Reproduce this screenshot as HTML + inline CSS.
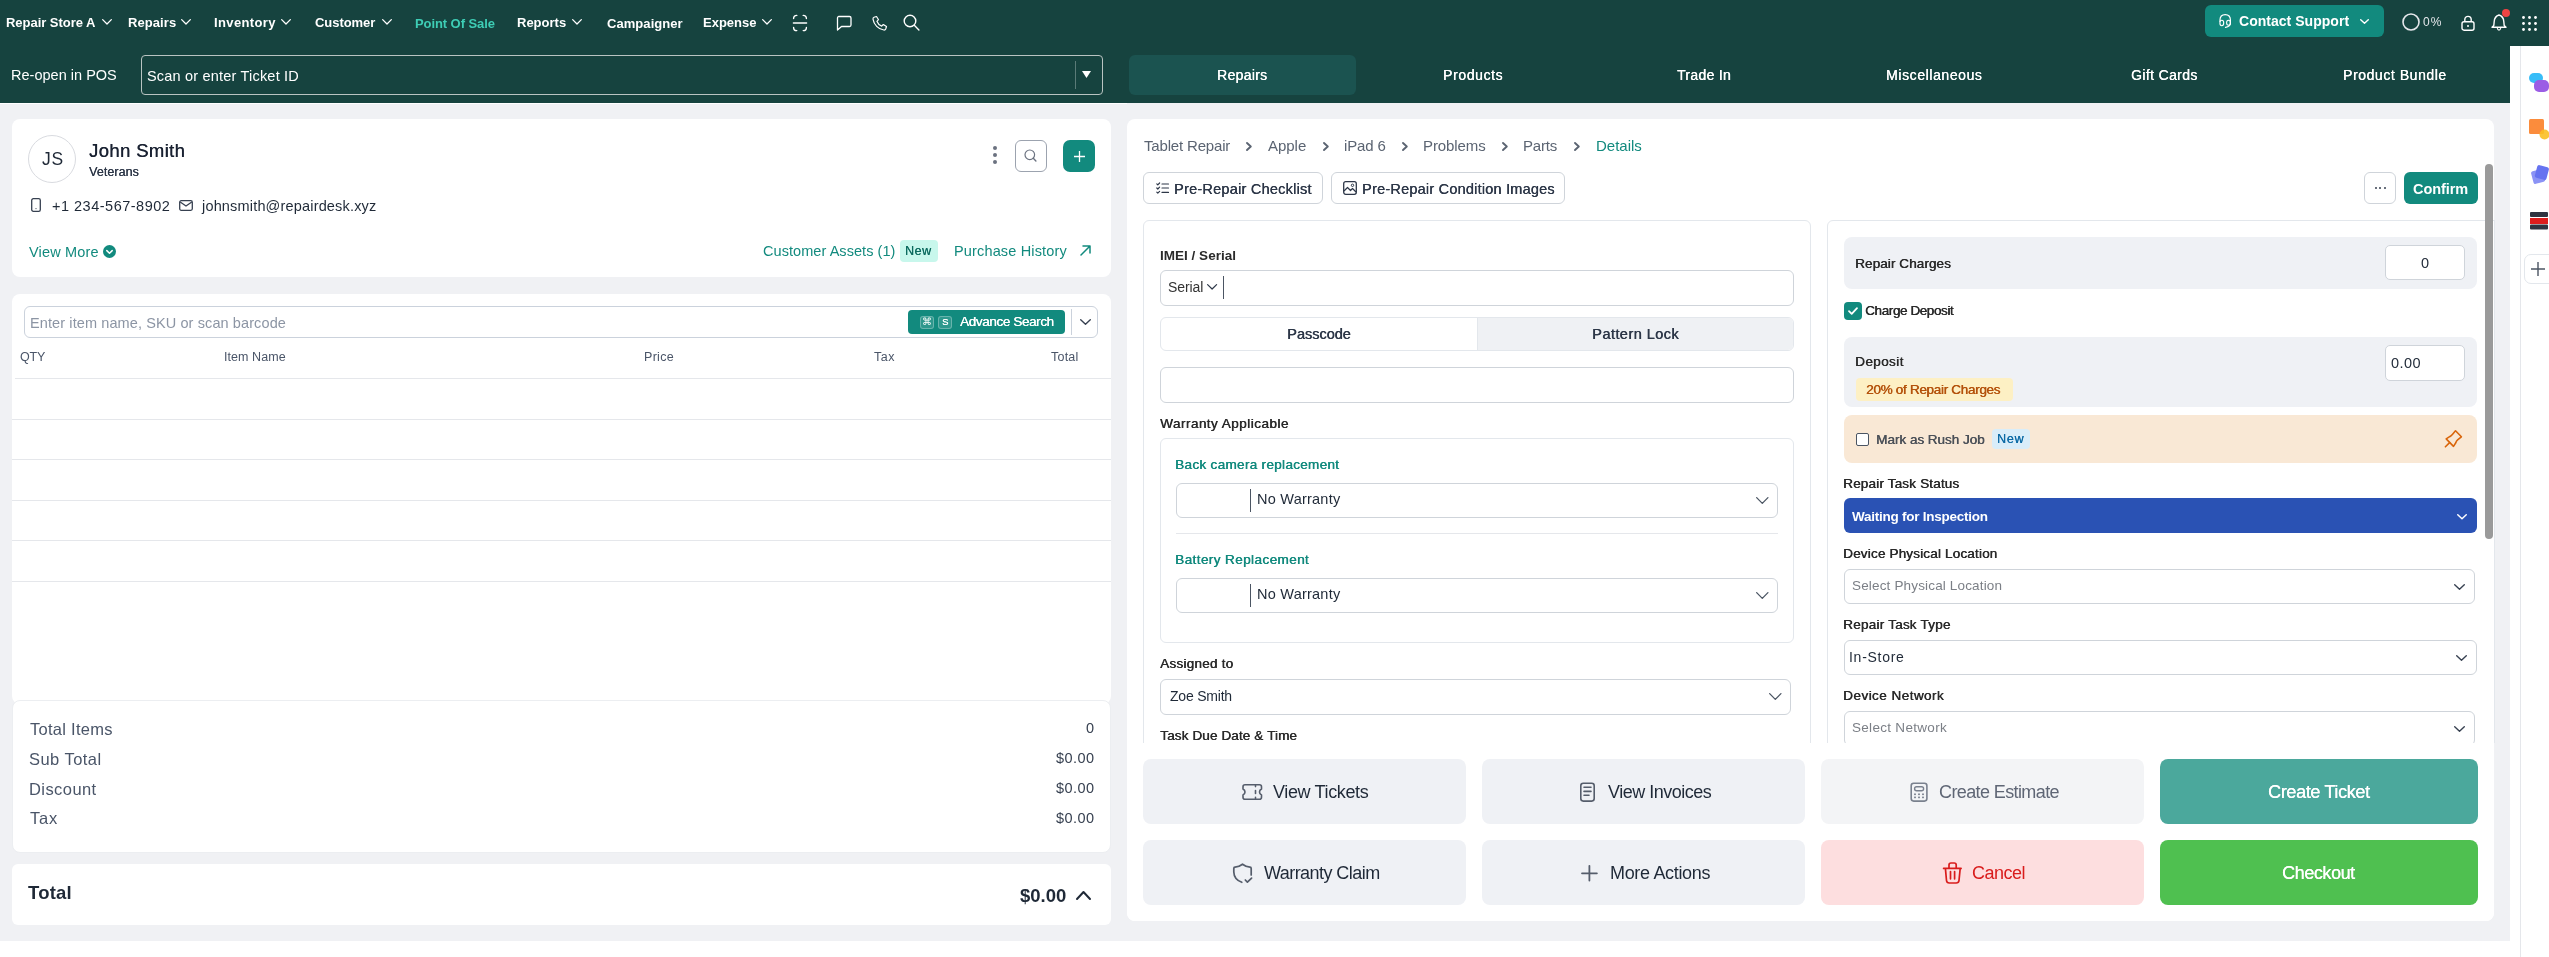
<!DOCTYPE html>
<html><head><meta charset="utf-8"><style>
html,body{margin:0;padding:0;}
body{width:2549px;height:957px;overflow:hidden;position:relative;background:#fff;font-family:"Liberation Sans", sans-serif;}
.t{position:absolute;white-space:nowrap;line-height:1;will-change:transform;}
svg{overflow:visible}
</style></head><body>
<div style="position:absolute;left:0px;top:0px;width:2549px;height:957px;background:#ffffff;border-radius:0px;"></div>
<div style="position:absolute;left:0px;top:103px;width:2510px;height:838px;background:#f0f1f4;border-radius:0px;"></div>
<div style="position:absolute;left:0px;top:0px;width:2549px;height:46px;background:#16433f;border-radius:0px;"></div>
<div style="position:absolute;left:0px;top:46px;width:2510px;height:57px;background:#16433f;border-radius:0px;"></div>
<div style="position:absolute;left:2510px;top:46px;width:39px;height:911px;background:#ffffff;border-radius:0px;"></div>
<div style="position:absolute;left:2520px;top:46px;width:1px;height:911px;background:#e5e7eb;border-radius:0px;"></div>
<svg style="position:absolute;left:102.0px;top:19px;" width="10" height="5.7" viewBox="0 0 10 5.7" fill="none"><polyline points="0.65,0.65 5.0,5.05 9.35,0.65" stroke="#ffffff" stroke-width="1.3" stroke-linecap="round" stroke-linejoin="round"/></svg>
<svg style="position:absolute;left:181.0px;top:19px;" width="10" height="5.7" viewBox="0 0 10 5.7" fill="none"><polyline points="0.65,0.65 5.0,5.05 9.35,0.65" stroke="#ffffff" stroke-width="1.3" stroke-linecap="round" stroke-linejoin="round"/></svg>
<svg style="position:absolute;left:281px;top:19px;" width="10" height="5.7" viewBox="0 0 10 5.7" fill="none"><polyline points="0.65,0.65 5.0,5.05 9.35,0.65" stroke="#ffffff" stroke-width="1.3" stroke-linecap="round" stroke-linejoin="round"/></svg>
<svg style="position:absolute;left:381.6px;top:19px;" width="10" height="5.7" viewBox="0 0 10 5.7" fill="none"><polyline points="0.65,0.65 5.0,5.05 9.35,0.65" stroke="#ffffff" stroke-width="1.3" stroke-linecap="round" stroke-linejoin="round"/></svg>
<svg style="position:absolute;left:572px;top:19px;" width="10" height="5.7" viewBox="0 0 10 5.7" fill="none"><polyline points="0.65,0.65 5.0,5.05 9.35,0.65" stroke="#ffffff" stroke-width="1.3" stroke-linecap="round" stroke-linejoin="round"/></svg>
<svg style="position:absolute;left:762px;top:19px;" width="10" height="5.7" viewBox="0 0 10 5.7" fill="none"><polyline points="0.65,0.65 5.0,5.05 9.35,0.65" stroke="#ffffff" stroke-width="1.3" stroke-linecap="round" stroke-linejoin="round"/></svg>
<svg style="position:absolute;left:790px;top:12px;" width="20" height="22" viewBox="790 12 20 22" fill="none"><path d="M793.6 18.6A3.2 3.2 0 0 1 796.8 15.4M803.2 15.4A3.2 3.2 0 0 1 806.4 18.6M806.4 27.4A3.2 3.2 0 0 1 803.2 30.6M796.8 30.6A3.2 3.2 0 0 1 793.6 27.4M793.4 23H806.6" stroke="#fff" stroke-width="1.4" stroke-linecap="round"/></svg>
<svg style="position:absolute;left:836px;top:15px;" width="16" height="16" viewBox="0 0 16 16" fill="none"><path d="M2.5 1.5h11a1.5 1.5 0 0 1 1.5 1.5v7a1.5 1.5 0 0 1-1.5 1.5H5.5L1.5 15V3a1.5 1.5 0 0 1 1-1.5z" stroke="#fff" stroke-width="1.3" stroke-linejoin="round"/></svg>
<svg style="position:absolute;left:872px;top:15px;" width="16" height="16" viewBox="0 0 16 16" fill="none"><path d="M4.5 1.5l2 3.2-1.6 1.6a8 8 0 0 0 4.8 4.8l1.6-1.6 3.2 2-.8 2.5c-.3.8-1.1 1.1-1.9 1C6.4 14.2 1.8 9.6 1 4.2c-.1-.8.3-1.6 1-1.9z" stroke="#fff" stroke-width="1.2" stroke-linejoin="round"/></svg>
<svg style="position:absolute;left:903px;top:13.8px;" width="17" height="17" viewBox="0 0 17 17" fill="none"><circle cx="7" cy="7" r="5.8" stroke="#fff" stroke-width="1.4"/><path d="M11.3 11.3l4.6 4.6" stroke="#fff" stroke-width="1.4" stroke-linecap="round"/></svg>
<div style="position:absolute;left:2205px;top:5px;width:179px;height:32px;background:#128a7e;border-radius:6px;"></div>
<svg style="position:absolute;left:2217px;top:12px;" width="16" height="18" viewBox="2217 12 16 18" fill="none"><path d="M2220 21.5V20Q2220 14.6 2225.2 14.6Q2230.4 14.6 2230.4 20V23.5Q2230.4 26.5 2225.5 27.3" stroke="#fff" stroke-width="1.2" stroke-linecap="round"/><ellipse cx="2221.8" cy="23" rx="1.9" ry="2.7" stroke="#fff" stroke-width="1.1"/><ellipse cx="2228.5" cy="22.8" rx="1.9" ry="2.5" stroke="#fff" stroke-width="1.1"/></svg>
<svg style="position:absolute;left:2360px;top:18.5px;" width="9" height="5" viewBox="0 0 9 5" fill="none"><polyline points="0.7,0.7 4.5,4.3 8.3,0.7" stroke="#ffffff" stroke-width="1.4" stroke-linecap="round" stroke-linejoin="round"/></svg>
<svg style="position:absolute;left:2402px;top:13px;" width="18" height="18" viewBox="0 0 18 18" fill="none"><circle cx="9" cy="9" r="8" stroke="#e5e7eb" stroke-width="1.6"/></svg>
<svg style="position:absolute;left:2461px;top:15px;" width="14" height="16" viewBox="0 0 14 16" fill="none"><rect x="1" y="6.8" width="12" height="8.4" rx="2" stroke="#fff" stroke-width="1.4"/><path d="M3.8 6.8V4.6a3.2 3.2 0 0 1 6.4 0v2.2" stroke="#fff" stroke-width="1.4"/><circle cx="7" cy="11" r="1" fill="#fff"/></svg>
<svg style="position:absolute;left:2489px;top:12px;" width="20" height="22" viewBox="2489 12 20 22" fill="none"><path d="M2499 15Q2503.5 16.5 2503.8 21.5L2504.2 25.5L2506 27.3H2492L2493.8 25.5L2494.2 21.5Q2494.5 16.5 2499 15Z" stroke="#fff" stroke-width="1.4" stroke-linejoin="round"/><path d="M2497.3 28.2Q2497.8 30.2 2499 30.2Q2500.2 30.2 2500.7 28.2" stroke="#fff" stroke-width="1.3"/></svg>
<div style="position:absolute;left:2502px;top:9px;width:8px;height:8px;background:#ef4444;border-radius:4px;"></div>
<svg style="position:absolute;left:2522px;top:15.5px;" width="15" height="15" viewBox="0 0 15 15" fill="none"><circle cx="1.5" cy="1.5" r="1.4" fill="#fff"/><circle cx="1.5" cy="7.5" r="1.4" fill="#fff"/><circle cx="1.5" cy="13.5" r="1.4" fill="#fff"/><circle cx="7.5" cy="1.5" r="1.4" fill="#fff"/><circle cx="7.5" cy="7.5" r="1.4" fill="#fff"/><circle cx="7.5" cy="13.5" r="1.4" fill="#fff"/><circle cx="13.5" cy="1.5" r="1.4" fill="#fff"/><circle cx="13.5" cy="7.5" r="1.4" fill="#fff"/><circle cx="13.5" cy="13.5" r="1.4" fill="#fff"/></svg>
<div style="position:absolute;left:141px;top:55px;width:962px;height:40px;background:transparent;border:1px solid #b9c4c2;box-sizing:border-box;border-radius:4px;"></div>
<div style="position:absolute;left:1075px;top:61px;width:1px;height:28px;background:#5b7b78;border-radius:0px;"></div>
<svg style="position:absolute;left:1082px;top:71px;" width="9" height="7" viewBox="0 0 9 7" fill="none"><path d="M0 0h9L4.5 7z" fill="#fff"/></svg>
<div style="position:absolute;left:1129px;top:55px;width:227px;height:40px;background:#1b5350;border-radius:6px;"></div>
<div style="position:absolute;left:0px;top:103px;width:1127px;height:1px;background:#ffffff;border-radius:0px;"></div>
<div style="position:absolute;left:12px;top:119px;width:1099px;height:158px;background:#ffffff;border-radius:8px;"></div>
<div style="position:absolute;left:28px;top:135px;width:48px;height:48px;background:#ffffff;border:1px solid #d9dbe0;box-sizing:border-box;border-radius:24px;"></div>
<svg style="position:absolute;left:31px;top:197.5px;" width="10" height="14" viewBox="0 0 10 14" fill="none"><rect x="0.7" y="0.7" width="8.6" height="12.6" rx="1.6" stroke="#374151" stroke-width="1.3"/><circle cx="5" cy="10.6" r="0.6" fill="#374151"/></svg>
<svg style="position:absolute;left:179px;top:199.5px;" width="14" height="11" viewBox="0 0 14 11" fill="none"><rect x="0.7" y="0.7" width="12.6" height="9.6" rx="1.5" stroke="#374151" stroke-width="1.3"/><path d="M1.2 2l5.8 4 5.8-4" stroke="#374151" stroke-width="1.3" stroke-linejoin="round"/></svg>
<div style="position:absolute;left:993px;top:146.4px;width:4px;height:4px;background:#6b7280;border-radius:2px;"></div>
<div style="position:absolute;left:993px;top:153.4px;width:4px;height:4px;background:#6b7280;border-radius:2px;"></div>
<div style="position:absolute;left:993px;top:160.4px;width:4px;height:4px;background:#6b7280;border-radius:2px;"></div>
<div style="position:absolute;left:1015px;top:140px;width:32px;height:32px;background:#ffffff;border:1px solid #9ca3af;box-sizing:border-box;border-radius:6px;"></div>
<svg style="position:absolute;left:1024px;top:149px;" width="13" height="13" viewBox="0 0 13 13" fill="none"><circle cx="5.8" cy="5.8" r="4.8" stroke="#6b7280" stroke-width="1.2"/><path d="M9.3 9.3l2.6 2.6" stroke="#6b7280" stroke-width="1.4" stroke-linecap="round"/></svg>
<div style="position:absolute;left:1063px;top:140px;width:32px;height:32px;background:#128a7e;border-radius:7px;"></div>
<svg style="position:absolute;left:1073.5px;top:150.5px;" width="11" height="11" viewBox="0 0 11 11" fill="none"><path d="M5.5 0v11M0 5.5h11" stroke="#fff" stroke-width="1.3"/></svg>
<svg style="position:absolute;left:103px;top:245px;" width="13" height="13" viewBox="0 0 13 13" fill="none"><circle cx="6.5" cy="6.5" r="6.5" fill="#128a7e"/><path d="M3.8 5.6l2.7 2.6 2.7-2.6" stroke="#fff" stroke-width="1.5" stroke-linecap="round" stroke-linejoin="round"/></svg>
<div style="position:absolute;left:900px;top:240px;width:38px;height:22px;background:#c8f7ec;border-radius:4px;"></div>
<svg style="position:absolute;left:1080px;top:245px;" width="11" height="11" viewBox="0 0 11 11" fill="none"><path d="M1 10L10 1M3 1h7v7" stroke="#128a7e" stroke-width="1.5" stroke-linecap="round" stroke-linejoin="round"/></svg>
<div style="position:absolute;left:12px;top:294px;width:1099px;height:410px;background:#ffffff;border-radius:8px;"></div>
<div style="position:absolute;left:24px;top:306px;width:1074px;height:32px;background:#ffffff;border:1px solid #cbd2dc;box-sizing:border-box;border-radius:6px;"></div>
<div style="position:absolute;left:908px;top:310px;width:157px;height:24px;background:#128a7e;border-radius:4px;"></div>
<div style="position:absolute;left:920px;top:315.5px;width:14px;height:13px;background:rgba(255,255,255,0.12);border:1px solid rgba(255,255,255,0.28);box-sizing:border-box;border-radius:3px;"></div>
<div style="position:absolute;left:938px;top:315.5px;width:14px;height:13px;background:rgba(255,255,255,0.12);border:1px solid rgba(255,255,255,0.28);box-sizing:border-box;border-radius:3px;"></div>
<div style="position:absolute;left:1071px;top:309px;width:1px;height:26px;background:#cbd2dc;border-radius:0px;"></div>
<svg style="position:absolute;left:1080px;top:319px;" width="11" height="6" viewBox="0 0 11 6" fill="none"><polyline points="0.7,0.7 5.5,5.3 10.3,0.7" stroke="#374151" stroke-width="1.4" stroke-linecap="round" stroke-linejoin="round"/></svg>
<div style="position:absolute;left:15px;top:378px;width:1096px;height:1px;background:#e5e7eb;border-radius:0px;"></div>
<div style="position:absolute;left:12px;top:419px;width:1099px;height:1px;background:#e5e7eb;border-radius:0px;"></div>
<div style="position:absolute;left:12px;top:459px;width:1099px;height:1px;background:#e5e7eb;border-radius:0px;"></div>
<div style="position:absolute;left:12px;top:500px;width:1099px;height:1px;background:#e5e7eb;border-radius:0px;"></div>
<div style="position:absolute;left:12px;top:540px;width:1099px;height:1px;background:#e5e7eb;border-radius:0px;"></div>
<div style="position:absolute;left:12px;top:581px;width:1099px;height:1px;background:#e5e7eb;border-radius:0px;"></div>
<div style="position:absolute;left:12px;top:700px;width:1099px;height:153px;background:#ffffff;border:1px solid #eceef1;box-sizing:border-box;border-radius:8px;"></div>
<div style="position:absolute;left:12px;top:864px;width:1099px;height:61px;background:#ffffff;border-radius:6px;"></div>
<svg style="position:absolute;left:1076px;top:891px;" width="15" height="9" viewBox="0 0 15 9" fill="none"><polyline points="1.0,8.0 7.5,1.0 14.0,8.0" stroke="#1f2937" stroke-width="2" stroke-linecap="round" stroke-linejoin="round"/></svg>
<div style="position:absolute;left:1127px;top:119px;width:1367px;height:802px;background:#ffffff;border-radius:8px;"></div>
<svg style="position:absolute;left:1246px;top:141.5px;" width="6" height="9" viewBox="0 0 6 9" fill="none"><polyline points="1,1 4.8,4.5 1,8" stroke="#5b6472" stroke-width="1.9" stroke-linecap="round" stroke-linejoin="round"/></svg>
<svg style="position:absolute;left:1322.7px;top:141.5px;" width="6" height="9" viewBox="0 0 6 9" fill="none"><polyline points="1,1 4.8,4.5 1,8" stroke="#5b6472" stroke-width="1.9" stroke-linecap="round" stroke-linejoin="round"/></svg>
<svg style="position:absolute;left:1401.5px;top:141.5px;" width="6" height="9" viewBox="0 0 6 9" fill="none"><polyline points="1,1 4.8,4.5 1,8" stroke="#5b6472" stroke-width="1.9" stroke-linecap="round" stroke-linejoin="round"/></svg>
<svg style="position:absolute;left:1502px;top:141.5px;" width="6" height="9" viewBox="0 0 6 9" fill="none"><polyline points="1,1 4.8,4.5 1,8" stroke="#5b6472" stroke-width="1.9" stroke-linecap="round" stroke-linejoin="round"/></svg>
<svg style="position:absolute;left:1573.7px;top:141.5px;" width="6" height="9" viewBox="0 0 6 9" fill="none"><polyline points="1,1 4.8,4.5 1,8" stroke="#5b6472" stroke-width="1.9" stroke-linecap="round" stroke-linejoin="round"/></svg>
<div style="position:absolute;left:1143px;top:172px;width:180px;height:32px;background:#ffffff;border:1px solid #cfd4da;box-sizing:border-box;border-radius:6px;"></div>
<svg style="position:absolute;left:1156px;top:182px;" width="13" height="12" viewBox="0 0 13 12" fill="none"><path d="M0.8 1.8l1 1 1.8-1.8M0.8 6l1 1 1.8-1.8M0.8 10.2l1 1 1.8-1.8M6 2h6.5M6 6h6.5M6 10.4h6.5" stroke="#2d3748" stroke-width="1.2" stroke-linecap="round" stroke-linejoin="round"/></svg>
<div style="position:absolute;left:1331px;top:172px;width:234px;height:32px;background:#ffffff;border:1px solid #cfd4da;box-sizing:border-box;border-radius:6px;"></div>
<svg style="position:absolute;left:1343px;top:181px;" width="14" height="14" viewBox="0 0 14 14" fill="none"><rect x="0.7" y="0.7" width="12.6" height="12.6" rx="2" stroke="#2d3748" stroke-width="1.3"/><path d="M1 10l3.5-3.5 3 3 2-2 3.5 3.5" stroke="#2d3748" stroke-width="1.2" stroke-linejoin="round"/><circle cx="9.5" cy="4.3" r="1.2" stroke="#2d3748" stroke-width="1"/></svg>
<div style="position:absolute;left:2364px;top:172px;width:32px;height:32px;background:#ffffff;border:1px solid #cfd4da;box-sizing:border-box;border-radius:6px;"></div>
<div style="position:absolute;left:2374.5px;top:187.2px;width:2.2px;height:2.2px;background:#374151;border-radius:1.1px;"></div>
<div style="position:absolute;left:2379px;top:187.2px;width:2.2px;height:2.2px;background:#374151;border-radius:1.1px;"></div>
<div style="position:absolute;left:2383.5px;top:187.2px;width:2.2px;height:2.2px;background:#374151;border-radius:1.1px;"></div>
<div style="position:absolute;left:2404px;top:172px;width:74px;height:32px;background:#128a7e;border-radius:6px;"></div>
<div style="position:absolute;left:1143px;top:220px;width:668px;height:560px;background:#ffffff;border:1px solid #e3e7ec;box-sizing:border-box;border-radius:6px;"></div>
<div style="position:absolute;left:1160px;top:270px;width:634px;height:36px;background:#ffffff;border:1px solid #cfd4da;box-sizing:border-box;border-radius:6px;"></div>
<svg style="position:absolute;left:1206.5px;top:283.5px;" width="10.2" height="5.6" viewBox="0 0 10.2 5.6" fill="none"><polyline points="0.6,0.6 5.1,5.0 9.6,0.6" stroke="#2d3748" stroke-width="1.2" stroke-linecap="round" stroke-linejoin="round"/></svg>
<div style="position:absolute;left:1223px;top:276px;width:1px;height:23px;background:#4b5563;border-radius:0px;"></div>
<div style="position:absolute;left:1160px;top:317px;width:634px;height:34px;background:#ffffff;border:1px solid #e3e7ec;box-sizing:border-box;border-radius:6px;"></div>
<div style="position:absolute;left:1477.5px;top:318px;width:315.5px;height:32px;background:#eff1f4;border-radius:0px;border-radius:0 5px 5px 0;"></div>
<div style="position:absolute;left:1477px;top:318px;width:1px;height:32px;background:#e3e7ec;border-radius:0px;"></div>
<div style="position:absolute;left:1160px;top:367px;width:634px;height:36px;background:#ffffff;border:1px solid #cfd4da;box-sizing:border-box;border-radius:6px;"></div>
<div style="position:absolute;left:1160px;top:438px;width:634px;height:205px;background:#ffffff;border:1px solid #e3e7ec;box-sizing:border-box;border-radius:6px;"></div>
<div style="position:absolute;left:1176px;top:483px;width:602px;height:35px;background:#ffffff;border:1px solid #cfd4da;box-sizing:border-box;border-radius:6px;"></div>
<div style="position:absolute;left:1250px;top:489px;width:1px;height:23px;background:#4b5563;border-radius:0px;"></div>
<svg style="position:absolute;left:1756px;top:497px;" width="12.6" height="7" viewBox="0 0 12.6 7" fill="none"><polyline points="0.65,0.65 6.3,6.35 11.95,0.65" stroke="#4b5563" stroke-width="1.3" stroke-linecap="round" stroke-linejoin="round"/></svg>
<div style="position:absolute;left:1176px;top:578px;width:602px;height:35px;background:#ffffff;border:1px solid #cfd4da;box-sizing:border-box;border-radius:6px;"></div>
<div style="position:absolute;left:1250px;top:584px;width:1px;height:23px;background:#4b5563;border-radius:0px;"></div>
<svg style="position:absolute;left:1756px;top:592px;" width="12.6" height="7" viewBox="0 0 12.6 7" fill="none"><polyline points="0.65,0.65 6.3,6.35 11.95,0.65" stroke="#4b5563" stroke-width="1.3" stroke-linecap="round" stroke-linejoin="round"/></svg>
<div style="position:absolute;left:1176px;top:533px;width:602px;height:1px;background:#e5e7eb;border-radius:0px;"></div>
<div style="position:absolute;left:1160px;top:679px;width:631px;height:36px;background:#ffffff;border:1px solid #cfd4da;box-sizing:border-box;border-radius:6px;"></div>
<svg style="position:absolute;left:1769px;top:693px;" width="12.6" height="7" viewBox="0 0 12.6 7" fill="none"><polyline points="0.65,0.65 6.3,6.35 11.95,0.65" stroke="#4b5563" stroke-width="1.3" stroke-linecap="round" stroke-linejoin="round"/></svg>
<div style="position:absolute;left:1827px;top:220px;width:680px;height:560px;background:#ffffff;border:1px solid #e3e7ec;box-sizing:border-box;border-radius:6px;"></div>
<div style="position:absolute;left:2494px;top:119px;width:16px;height:822px;background:#f0f1f4;border-radius:0px;"></div>
<div style="position:absolute;left:1844px;top:237px;width:633px;height:52px;background:#eff1f5;border-radius:8px;"></div>
<div style="position:absolute;left:2385px;top:245px;width:80px;height:35px;background:#ffffff;border:1px solid #cfd4da;box-sizing:border-box;border-radius:5px;"></div>
<div style="position:absolute;left:1844px;top:302px;width:18px;height:18px;background:#128a7e;border-radius:4px;"></div>
<svg style="position:absolute;left:1848px;top:306px;" width="10" height="10" viewBox="0 0 10 10" fill="none"><path d="M1 5.2l2.7 2.6L9 2.2" stroke="#fff" stroke-width="1.8" stroke-linecap="round" stroke-linejoin="round"/></svg>
<div style="position:absolute;left:1844px;top:337px;width:633px;height:70px;background:#eff1f5;border-radius:8px;"></div>
<div style="position:absolute;left:1856px;top:378px;width:157px;height:23px;background:#fdf0c4;border-radius:4px;"></div>
<div style="position:absolute;left:2385px;top:345px;width:80px;height:36px;background:#ffffff;border:1px solid #cfd4da;box-sizing:border-box;border-radius:5px;"></div>
<div style="position:absolute;left:1844px;top:415px;width:633px;height:48px;background:#f9e8d5;border-radius:8px;"></div>
<div style="position:absolute;left:1856px;top:433px;width:13px;height:13px;background:#ffffff;border:1px solid #4b5563;box-sizing:border-box;border-radius:2px;"></div>
<div style="position:absolute;left:1992px;top:429px;width:38px;height:20px;background:#d9edf9;border-radius:4px;"></div>
<svg style="position:absolute;left:2441px;top:427px;" width="24" height="24" viewBox="2441 427 24 24" fill="none"><path d="M2455.5 430.8L2461.4 436.8L2457.6 439.8Q2456.3 440.9 2455.8 442.8L2453.5 446.4L2446.2 438.9L2449.6 436.7Q2451.4 435.6 2452.6 434.2Z" stroke="#d9650b" stroke-width="1.6" stroke-linejoin="round"/><path d="M2449.6 442.6L2445.4 446.8" stroke="#d9650b" stroke-width="1.6" stroke-linecap="round"/></svg>
<div style="position:absolute;left:1844px;top:498px;width:633px;height:35px;background:#2a52b4;border-radius:6px;"></div>
<svg style="position:absolute;left:2456.5px;top:513.5px;" width="10" height="5.5" viewBox="0 0 10 5.5" fill="none"><polyline points="0.75,0.75 5.0,4.75 9.25,0.75" stroke="#ffffff" stroke-width="1.5" stroke-linecap="round" stroke-linejoin="round"/></svg>
<div style="position:absolute;left:1844px;top:568.5px;width:630.5px;height:35.5px;background:#ffffff;border:1px solid #cfd4da;box-sizing:border-box;border-radius:6px;"></div>
<svg style="position:absolute;left:2453.5px;top:583.5px;" width="11" height="6" viewBox="0 0 11 6" fill="none"><polyline points="0.7,0.7 5.5,5.3 10.3,0.7" stroke="#374151" stroke-width="1.4" stroke-linecap="round" stroke-linejoin="round"/></svg>
<div style="position:absolute;left:1844px;top:639.5px;width:633px;height:35.5px;background:#ffffff;border:1px solid #cfd4da;box-sizing:border-box;border-radius:6px;"></div>
<svg style="position:absolute;left:2456px;top:654.5px;" width="11" height="6" viewBox="0 0 11 6" fill="none"><polyline points="0.7,0.7 5.5,5.3 10.3,0.7" stroke="#374151" stroke-width="1.4" stroke-linecap="round" stroke-linejoin="round"/></svg>
<div style="position:absolute;left:1844px;top:710.5px;width:630.5px;height:35.5px;background:#ffffff;border:1px solid #cfd4da;box-sizing:border-box;border-radius:6px;"></div>
<svg style="position:absolute;left:2453.5px;top:725.5px;" width="11" height="6" viewBox="0 0 11 6" fill="none"><polyline points="0.7,0.7 5.5,5.3 10.3,0.7" stroke="#374151" stroke-width="1.4" stroke-linecap="round" stroke-linejoin="round"/></svg>
<div style="position:absolute;left:1127px;top:743px;width:1367px;height:178px;background:#ffffff;border-radius:0px;border-radius:0 0 8px 8px;"></div>
<div style="position:absolute;left:2485px;top:164px;width:8px;height:375px;background:#9a9a9a;border-radius:4px;"></div>
<div style="position:absolute;left:2494px;top:220px;width:1px;height:523px;background:#e3e7ec;border-radius:0px;"></div>
<div style="position:absolute;left:1143px;top:759px;width:323px;height:65px;background:#eff1f5;border-radius:8px;"></div>
<div style="position:absolute;left:1482px;top:759px;width:323px;height:65px;background:#eff1f5;border-radius:8px;"></div>
<div style="position:absolute;left:1821px;top:759px;width:323px;height:65px;background:#f3f4f6;border-radius:8px;"></div>
<div style="position:absolute;left:2160px;top:759px;width:318px;height:65px;background:#4ba89c;border-radius:8px;"></div>
<div style="position:absolute;left:1143px;top:840px;width:323px;height:65px;background:#eff1f5;border-radius:8px;"></div>
<div style="position:absolute;left:1482px;top:840px;width:323px;height:65px;background:#eff1f5;border-radius:8px;"></div>
<div style="position:absolute;left:1821px;top:840px;width:323px;height:65px;background:#fddedf;border-radius:8px;"></div>
<div style="position:absolute;left:2160px;top:840px;width:318px;height:65px;background:#4fc050;border-radius:8px;"></div>
<svg style="position:absolute;left:1238px;top:780px;" width="28" height="24" viewBox="1238 780 28 24" fill="none"><path d="M1245 784.8H1259.5Q1261.5 784.8 1261.5 786.8V789Q1259.5 790 1259.5 792Q1259.5 794 1261.5 795V797.2Q1261.5 799.2 1259.5 799.2H1245Q1243 799.2 1243 797.2V795Q1245 794 1245 792Q1245 790 1243 789V786.8Q1243 784.8 1245 784.8Z" stroke="#555d6b" stroke-width="1.6" stroke-linejoin="round"/><path d="M1255.5 785.6V786.6M1255.5 790.6V793.4M1255.5 797.4V798.4" stroke="#555d6b" stroke-width="1.6" stroke-linecap="round"/></svg>
<svg style="position:absolute;left:1576px;top:779px;" width="22" height="26" viewBox="1576 779 22 26" fill="none"><rect x="1580.8" y="783.2" width="13.4" height="17.9" rx="2.5" stroke="#555d6b" stroke-width="1.6"/><path d="M1584 787.3H1591M1584 791.4H1591M1584 795.3H1589" stroke="#555d6b" stroke-width="1.6" stroke-linecap="round"/></svg>
<svg style="position:absolute;left:1907px;top:779px;" width="24" height="26" viewBox="1907 779 24 26" fill="none"><rect x="1911.2" y="783.2" width="15.7" height="17.9" rx="2.5" stroke="#7a818e" stroke-width="1.6"/><rect x="1914.6" y="786.8" width="9" height="4" rx="2" stroke="#7a818e" stroke-width="1.4"/><rect x="1914.1" y="793.5" width="1.8" height="1.6" fill="#7a818e"/><rect x="1914.1" y="796.6" width="1.8" height="1.6" fill="#7a818e"/><rect x="1918.1" y="793.5" width="1.8" height="1.6" fill="#7a818e"/><rect x="1918.1" y="796.6" width="1.8" height="1.6" fill="#7a818e"/><rect x="1922.1" y="793.5" width="1.8" height="1.6" fill="#7a818e"/><rect x="1922.1" y="796.6" width="1.8" height="1.6" fill="#7a818e"/></svg>
<svg style="position:absolute;left:1229px;top:860px;" width="26" height="26" viewBox="1229 860 26 26" fill="none"><path d="M1251.2 875V868.5Q1251.2 867.3 1250 867.2Q1246 866.8 1242.5 864.2Q1239 866.8 1235 867.2Q1233.8 867.3 1233.8 868.5V872Q1234 879.5 1241.8 882.3" stroke="#555d6b" stroke-width="1.7" stroke-linecap="round" stroke-linejoin="round"/><path d="M1245.3 880L1247.4 882.2L1251.6 878.2" stroke="#555d6b" stroke-width="1.7" stroke-linecap="round" stroke-linejoin="round"/></svg>
<svg style="position:absolute;left:1578px;top:862px;" width="23" height="23" viewBox="1578 862 23 23" fill="none"><path d="M1589.4 865.8V880.6M1582 873.3H1596.9" stroke="#555d6b" stroke-width="1.8" stroke-linecap="round"/></svg>
<svg style="position:absolute;left:1940px;top:860px;" width="25" height="26" viewBox="1940 860 25 26" fill="none"><path d="M1943.6 868.4H1961.1M1949 868.4V865Q1949 863 1951 863H1954.2Q1956.2 863 1956.2 865V868.4M1945.4 868.4L1946.5 880.5Q1946.8 883 1949.3 883H1956.2Q1958.7 883 1959 880.5L1960.2 868.4M1950.5 871.6V878.8M1954.6 871.6V878.8" stroke="#d91c1c" stroke-width="1.7" stroke-linecap="round" stroke-linejoin="round"/></svg>
<svg style="position:absolute;left:2528px;top:72px;" width="21" height="21" viewBox="0 0 21 21" fill="none"><rect x="1" y="1" width="14" height="10" rx="5" fill="#38bdf8"/><rect x="6" y="8" width="15" height="12" rx="5" fill="#9b5de5"/></svg>
<svg style="position:absolute;left:2528px;top:118px;" width="21" height="22" viewBox="0 0 21 22" fill="none"><rect x="1" y="1" width="15" height="15" rx="1.5" fill="#fb8c3c"/><circle cx="16.5" cy="16.5" r="5" fill="#fbbf24" fill-opacity="0.9"/></svg>
<svg style="position:absolute;left:2530px;top:164px;" width="19" height="21" viewBox="0 0 19 21" fill="none"><rect x="2" y="6" width="12" height="13" rx="2" fill="#8b93f5" transform="rotate(-15 8 12)"/><rect x="6" y="2" width="12" height="13" rx="2" fill="#6673f0" transform="rotate(15 12 8)"/></svg>
<svg style="position:absolute;left:2530px;top:212px;" width="18" height="18" viewBox="0 0 18 18" fill="none"><rect x="0" y="0" width="18" height="5" rx="1" fill="#2e3440"/><rect x="0" y="6" width="18" height="6" fill="#dc1d1d"/><rect x="0" y="12.5" width="18" height="5" rx="1" fill="#2e3440"/></svg>
<div style="position:absolute;left:2524px;top:254px;width:40px;height:30px;background:#ffffff;border:1px solid #e3e7ec;box-sizing:border-box;border-radius:7px;"></div>
<svg style="position:absolute;left:2530px;top:261px;" width="16" height="16" viewBox="0 0 16 16" fill="none"><path d="M8 1v14M1 8h14" stroke="#4b5563" stroke-width="1.4"/></svg>
<div class="t" id="t0" style="left:6.40px;top:15.90px;font-size:13px;font-weight:700;color:#ffffff;letter-spacing:-0.031px;">Repair Store A</div>
<div class="t" id="t1" style="left:127.50px;top:15.90px;font-size:13px;font-weight:700;color:#ffffff;letter-spacing:0.083px;">Repairs</div>
<div class="t" id="t2" style="left:214.00px;top:15.90px;font-size:13px;font-weight:700;color:#ffffff;letter-spacing:0.375px;">Inventory</div>
<div class="t" id="t3" style="left:315.00px;top:15.90px;font-size:13px;font-weight:700;color:#ffffff;letter-spacing:-0.057px;">Customer</div>
<div class="t" id="t4" style="left:415.00px;top:16.60px;font-size:13px;font-weight:700;color:#3ecdb5;letter-spacing:-0.083px;">Point Of Sale</div>
<div class="t" id="t5" style="left:517.00px;top:15.90px;font-size:13px;font-weight:700;color:#ffffff;letter-spacing:0.000px;">Reports</div>
<div class="t" id="t6" style="left:606.50px;top:16.60px;font-size:13px;font-weight:700;color:#ffffff;letter-spacing:0.056px;">Campaigner</div>
<div class="t" id="t7" style="left:703.00px;top:15.90px;font-size:13px;font-weight:700;color:#ffffff;letter-spacing:0.000px;">Expense</div>
<div class="t" id="t8" style="left:2238.60px;top:14.15px;font-size:14px;font-weight:700;color:#ffffff;letter-spacing:0.029px;">Contact Support</div>
<div class="t" id="t9" style="left:2423.00px;top:15.64px;font-size:12px;font-weight:400;color:#e5e7eb;letter-spacing:1.000px;">0%</div>
<div class="t" id="t10" style="left:11.20px;top:67.83px;font-size:14.5px;font-weight:400;color:#ffffff;letter-spacing:0.015px;">Re-open in POS</div>
<div class="t" id="t11" style="left:147.30px;top:68.83px;font-size:14.5px;font-weight:400;color:#ffffff;letter-spacing:0.195px;">Scan or enter Ticket ID</div>
<div class="t" id="t12" style="left:1217.30px;top:68.15px;font-size:14px;font-weight:400;color:#ffffff;letter-spacing:0.300px;text-shadow:0.3px 0 0 #ffffff;">Repairs</div>
<div class="t" id="t13" style="left:1442.70px;top:68.15px;font-size:14px;font-weight:400;color:#ffffff;letter-spacing:0.614px;text-shadow:0.3px 0 0 #ffffff;">Products</div>
<div class="t" id="t14" style="left:1677.30px;top:68.15px;font-size:14px;font-weight:400;color:#ffffff;letter-spacing:0.286px;text-shadow:0.3px 0 0 #ffffff;">Trade In</div>
<div class="t" id="t15" style="left:1885.70px;top:68.15px;font-size:14px;font-weight:400;color:#ffffff;letter-spacing:0.592px;text-shadow:0.3px 0 0 #ffffff;">Miscellaneous</div>
<div class="t" id="t16" style="left:2130.70px;top:68.15px;font-size:14px;font-weight:400;color:#ffffff;letter-spacing:0.356px;text-shadow:0.3px 0 0 #ffffff;">Gift Cards</div>
<div class="t" id="t17" style="left:2343.00px;top:68.15px;font-size:14px;font-weight:400;color:#ffffff;letter-spacing:0.562px;text-shadow:0.3px 0 0 #ffffff;">Product Bundle</div>
<div class="t" id="t18" style="left:41.60px;top:150.79px;font-size:17.5px;font-weight:400;color:#1f2937;letter-spacing:0.700px;">JS</div>
<div class="t" id="t19" style="left:88.70px;top:142.14px;font-size:18.5px;font-weight:400;color:#1a2232;letter-spacing:0.367px;text-shadow:0.3px 0 0 #1a2232;">John Smith</div>
<div class="t" id="t20" style="left:88.70px;top:166.42px;font-size:12.5px;font-weight:400;color:#2d3748;letter-spacing:0.043px;text-shadow:0.3px 0 0 #2d3748;">Veterans</div>
<div class="t" id="t21" style="left:52.00px;top:198.73px;font-size:14.5px;font-weight:400;color:#1f2937;letter-spacing:0.500px;">+1 234-567-8902</div>
<div class="t" id="t22" style="left:202.00px;top:198.73px;font-size:14.5px;font-weight:400;color:#1f2937;letter-spacing:0.174px;">johnsmith@repairdesk.xyz</div>
<div class="t" id="t23" style="left:28.60px;top:244.73px;font-size:14.5px;font-weight:400;color:#128a7e;letter-spacing:0.175px;">View More</div>
<div class="t" id="t24" style="left:762.70px;top:244.23px;font-size:14.5px;font-weight:400;color:#128a7e;letter-spacing:0.061px;">Customer Assets (1)</div>
<div class="t" id="t25" style="left:905.00px;top:244.92px;font-size:12.5px;font-weight:400;color:#0d6b5f;letter-spacing:0.500px;text-shadow:0.3px 0 0 #0d6b5f;">New</div>
<div class="t" id="t26" style="left:953.50px;top:243.73px;font-size:14.5px;font-weight:400;color:#128a7e;letter-spacing:0.153px;">Purchase History</div>
<div class="t" id="t27" style="left:30.40px;top:315.73px;font-size:14.5px;font-weight:400;color:#8c95a4;letter-spacing:0.103px;">Enter item name, SKU or scan barcode</div>
<div class="t" id="t28" style="left:921.50px;top:317.04px;font-size:10px;font-weight:400;color:#ffffff;letter-spacing:0.000px;">&#8984;</div>
<div class="t" id="t29" style="left:941.50px;top:317.46px;font-size:9.5px;font-weight:400;color:#ffffff;letter-spacing:0.000px;text-shadow:0.3px 0 0 #ffffff;">S</div>
<div class="t" id="t30" style="left:960.00px;top:314.57px;font-size:13.5px;font-weight:400;color:#ffffff;letter-spacing:-0.385px;text-shadow:0.3px 0 0 #ffffff;">Advance Search</div>
<div class="t" id="t31" style="left:20.30px;top:351.22px;font-size:12.5px;font-weight:400;color:#4a5568;letter-spacing:-0.150px;">QTY</div>
<div class="t" id="t32" style="left:224.00px;top:351.22px;font-size:12.5px;font-weight:400;color:#4a5568;letter-spacing:0.062px;">Item Name</div>
<div class="t" id="t33" style="left:643.80px;top:351.22px;font-size:12.5px;font-weight:400;color:#4a5568;letter-spacing:0.300px;">Price</div>
<div class="t" id="t34" style="left:874.00px;top:351.22px;font-size:12.5px;font-weight:400;color:#4a5568;letter-spacing:0.500px;">Tax</div>
<div class="t" id="t35" style="left:1050.60px;top:351.22px;font-size:12.5px;font-weight:400;color:#4a5568;letter-spacing:0.225px;">Total</div>
<div class="t" id="t36" style="left:29.60px;top:721.03px;font-size:16.5px;font-weight:400;color:#4a5568;letter-spacing:0.280px;">Total Items</div>
<div class="t" id="t37" style="left:28.60px;top:750.63px;font-size:16.5px;font-weight:400;color:#4a5568;letter-spacing:0.450px;">Sub Total</div>
<div class="t" id="t38" style="left:28.60px;top:780.83px;font-size:16.5px;font-weight:400;color:#4a5568;letter-spacing:0.429px;">Discount</div>
<div class="t" id="t39" style="left:29.60px;top:810.43px;font-size:16.5px;font-weight:400;color:#4a5568;letter-spacing:0.750px;">Tax</div>
<div class="t" id="t40" style="left:1085.60px;top:720.73px;font-size:14.5px;font-weight:400;color:#374151;letter-spacing:0.100px;">0</div>
<div class="t" id="t41" style="left:1056.00px;top:751.13px;font-size:14.5px;font-weight:400;color:#374151;letter-spacing:0.425px;">$0.00</div>
<div class="t" id="t42" style="left:1056.00px;top:781.23px;font-size:14.5px;font-weight:400;color:#374151;letter-spacing:0.425px;">$0.00</div>
<div class="t" id="t43" style="left:1056.00px;top:811.03px;font-size:14.5px;font-weight:400;color:#374151;letter-spacing:0.425px;">$0.00</div>
<div class="t" id="t44" style="left:28.20px;top:883.74px;font-size:18.5px;font-weight:700;color:#1f2937;letter-spacing:0.200px;">Total</div>
<div class="t" id="t45" style="left:1019.70px;top:886.64px;font-size:18.5px;font-weight:700;color:#1f2937;letter-spacing:-0.025px;">$0.00</div>
<div class="t" id="t46" style="left:1144.00px;top:138.10px;font-size:15px;font-weight:400;color:#5b6472;letter-spacing:-0.175px;">Tablet Repair</div>
<div class="t" id="t47" style="left:1268.30px;top:138.10px;font-size:15px;font-weight:400;color:#5b6472;letter-spacing:-0.025px;">Apple</div>
<div class="t" id="t48" style="left:1343.70px;top:138.10px;font-size:15px;font-weight:400;color:#5b6472;letter-spacing:-0.140px;">iPad 6</div>
<div class="t" id="t49" style="left:1423.00px;top:138.10px;font-size:15px;font-weight:400;color:#5b6472;letter-spacing:-0.100px;">Problems</div>
<div class="t" id="t50" style="left:1523.30px;top:138.10px;font-size:15px;font-weight:400;color:#5b6472;letter-spacing:-0.200px;">Parts</div>
<div class="t" id="t51" style="left:1595.50px;top:138.10px;font-size:15px;font-weight:400;color:#128a7e;letter-spacing:0.000px;">Details</div>
<div class="t" id="t52" style="left:1174.00px;top:181.93px;font-size:14.5px;font-weight:400;color:#2d3748;letter-spacing:0.232px;text-shadow:0.3px 0 0 #2d3748;">Pre-Repair Checklist</div>
<div class="t" id="t53" style="left:1361.50px;top:181.93px;font-size:14.5px;font-weight:400;color:#2d3748;letter-spacing:0.212px;text-shadow:0.3px 0 0 #2d3748;">Pre-Repair Condition Images</div>
<div class="t" id="t54" style="left:2413.00px;top:182.23px;font-size:14.5px;font-weight:700;color:#ffffff;letter-spacing:-0.067px;">Confirm</div>
<div class="t" id="t55" style="left:1159.60px;top:248.57px;font-size:13.5px;font-weight:700;color:#2a2a2a;letter-spacing:0.017px;">IMEI / Serial</div>
<div class="t" id="t56" style="left:1167.90px;top:280.45px;font-size:14px;font-weight:400;color:#333333;letter-spacing:-0.100px;">Serial</div>
<div class="t" id="t57" style="left:1287.00px;top:327.23px;font-size:14.5px;font-weight:400;color:#2d3748;letter-spacing:0.000px;text-shadow:0.5px 0 0 #2d3748;">Passcode</div>
<div class="t" id="t58" style="left:1592.00px;top:327.23px;font-size:14.5px;font-weight:400;color:#2d3748;letter-spacing:0.455px;text-shadow:0.5px 0 0 #2d3748;">Pattern Lock</div>
<div class="t" id="t59" style="left:1160.00px;top:416.57px;font-size:13.5px;font-weight:400;color:#2a2a2a;letter-spacing:0.478px;text-shadow:0.5px 0 0 #2a2a2a;">Warranty Applicable</div>
<div class="t" id="t60" style="left:1175.00px;top:457.57px;font-size:13.5px;font-weight:400;color:#128a7e;letter-spacing:0.318px;text-shadow:0.5px 0 0 #128a7e;">Back camera replacement</div>
<div class="t" id="t61" style="left:1256.50px;top:491.53px;font-size:14.5px;font-weight:400;color:#1f2937;letter-spacing:0.230px;">No Warranty</div>
<div class="t" id="t62" style="left:1175.00px;top:552.57px;font-size:13.5px;font-weight:400;color:#128a7e;letter-spacing:0.417px;text-shadow:0.5px 0 0 #128a7e;">Battery Replacement</div>
<div class="t" id="t63" style="left:1256.50px;top:586.53px;font-size:14.5px;font-weight:400;color:#1f2937;letter-spacing:0.230px;">No Warranty</div>
<div class="t" id="t64" style="left:1160.00px;top:657.47px;font-size:13.5px;font-weight:400;color:#2a2a2a;letter-spacing:0.240px;text-shadow:0.5px 0 0 #2a2a2a;">Assigned to</div>
<div class="t" id="t65" style="left:1169.70px;top:689.15px;font-size:14px;font-weight:400;color:#1f2937;letter-spacing:-0.213px;">Zoe Smith</div>
<div class="t" id="t66" style="left:1160.00px;top:728.57px;font-size:13.5px;font-weight:400;color:#2a2a2a;letter-spacing:0.130px;text-shadow:0.5px 0 0 #2a2a2a;">Task Due Date &amp; Time</div>
<div class="t" id="t67" style="left:1854.80px;top:256.57px;font-size:13.5px;font-weight:400;color:#2a2a2a;letter-spacing:0.085px;text-shadow:0.5px 0 0 #2a2a2a;">Repair Charges</div>
<div class="t" id="t68" style="left:2420.50px;top:256.23px;font-size:14.5px;font-weight:400;color:#1f2937;letter-spacing:0.000px;">0</div>
<div class="t" id="t69" style="left:1865.00px;top:303.57px;font-size:13.5px;font-weight:400;color:#2a2a2a;letter-spacing:-0.408px;text-shadow:0.5px 0 0 #2a2a2a;">Charge Deposit</div>
<div class="t" id="t70" style="left:1855.00px;top:354.57px;font-size:13.5px;font-weight:400;color:#2a2a2a;letter-spacing:0.400px;text-shadow:0.5px 0 0 #2a2a2a;">Deposit</div>
<div class="t" id="t71" style="left:1866.40px;top:382.77px;font-size:13.5px;font-weight:400;color:#b4520b;letter-spacing:-0.300px;text-shadow:0.5px 0 0 #b4520b;">20% of Repair Charges</div>
<div class="t" id="t72" style="left:2390.70px;top:355.73px;font-size:14.5px;font-weight:400;color:#1f2937;letter-spacing:0.433px;">0.00</div>
<div class="t" id="t73" style="left:1876.00px;top:432.57px;font-size:13.5px;font-weight:400;color:#4b5058;letter-spacing:-0.020px;text-shadow:0.5px 0 0 #4b5058;">Mark as Rush Job</div>
<div class="t" id="t74" style="left:1997.00px;top:432.92px;font-size:12.5px;font-weight:400;color:#0b6aa5;letter-spacing:0.750px;text-shadow:0.3px 0 0 #0b6aa5;">New</div>
<div class="t" id="t75" style="left:1843.00px;top:476.57px;font-size:13.5px;font-weight:400;color:#2a2a2a;letter-spacing:0.176px;text-shadow:0.5px 0 0 #2a2a2a;">Repair Task Status</div>
<div class="t" id="t76" style="left:1851.60px;top:510.37px;font-size:13.5px;font-weight:700;color:#ffffff;letter-spacing:-0.252px;">Waiting for Inspection</div>
<div class="t" id="t77" style="left:1843.00px;top:546.57px;font-size:13.5px;font-weight:400;color:#2a2a2a;letter-spacing:0.174px;text-shadow:0.5px 0 0 #2a2a2a;">Device Physical Location</div>
<div class="t" id="t78" style="left:1852.00px;top:579.07px;font-size:13.5px;font-weight:400;color:#7b7f86;letter-spacing:0.161px;">Select Physical Location</div>
<div class="t" id="t79" style="left:1843.00px;top:617.97px;font-size:13.5px;font-weight:400;color:#2a2a2a;letter-spacing:0.233px;text-shadow:0.5px 0 0 #2a2a2a;">Repair Task Type</div>
<div class="t" id="t80" style="left:1848.90px;top:649.65px;font-size:14px;font-weight:400;color:#1f2937;letter-spacing:0.729px;">In-Store</div>
<div class="t" id="t81" style="left:1843.00px;top:688.57px;font-size:13.5px;font-weight:400;color:#2a2a2a;letter-spacing:0.462px;text-shadow:0.5px 0 0 #2a2a2a;">Device Network</div>
<div class="t" id="t82" style="left:1852.00px;top:721.07px;font-size:13.5px;font-weight:400;color:#7b7f86;letter-spacing:0.300px;">Select Network</div>
<div class="t" id="t83" style="left:1273.40px;top:783.26px;font-size:18px;font-weight:400;color:#1f2937;letter-spacing:-0.364px;">View Tickets</div>
<div class="t" id="t84" style="left:1608.40px;top:783.26px;font-size:18px;font-weight:400;color:#1f2937;letter-spacing:-0.500px;">View Invoices</div>
<div class="t" id="t85" style="left:1939.00px;top:783.26px;font-size:18px;font-weight:400;color:#5f6675;letter-spacing:-0.607px;">Create Estimate</div>
<div class="t" id="t86" style="left:2267.70px;top:783.26px;font-size:18px;font-weight:400;color:#ffffff;letter-spacing:-0.342px;text-shadow:0.3px 0 0 #ffffff;">Create Ticket</div>
<div class="t" id="t87" style="left:1263.80px;top:864.26px;font-size:18px;font-weight:400;color:#1f2937;letter-spacing:-0.554px;">Warranty Claim</div>
<div class="t" id="t88" style="left:1609.60px;top:864.26px;font-size:18px;font-weight:400;color:#1f2937;letter-spacing:-0.327px;">More Actions</div>
<div class="t" id="t89" style="left:1972.20px;top:864.26px;font-size:18px;font-weight:400;color:#d91c1c;letter-spacing:-0.520px;">Cancel</div>
<div class="t" id="t90" style="left:2282.00px;top:864.26px;font-size:18px;font-weight:400;color:#ffffff;letter-spacing:-0.429px;text-shadow:0.3px 0 0 #ffffff;">Checkout</div>
</body></html>
